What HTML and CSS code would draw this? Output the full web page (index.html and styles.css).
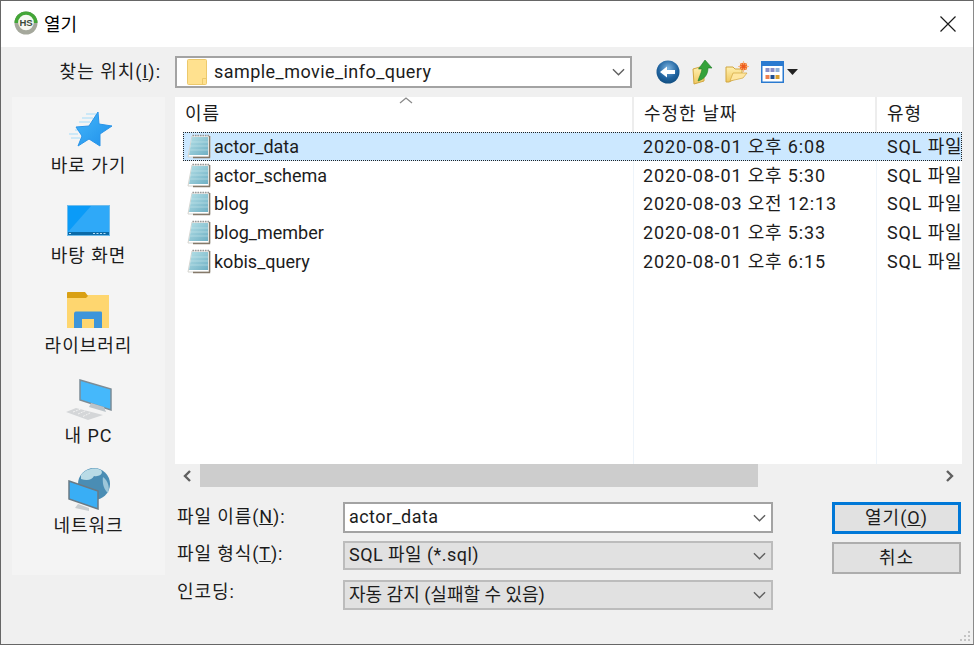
FILE: index.html
```html
<!DOCTYPE html>
<html lang="ko">
<head>
  <meta charset="UTF-8">
  <title>열기</title>
  <link rel="stylesheet" href="styles.css">
</head>
<body>
  <!-- Shared icons -->
  <svg class="icon-defs" width="0" height="0">
    <defs>
      <linearGradient id="page-fill" x1="0" y1="0" x2="1" y2="1">
        <stop offset="0" stop-color="#b4dfe6"/>
        <stop offset="1" stop-color="#6fb0c4"/>
      </linearGradient>
      <linearGradient id="folder-fill" x1="0" y1="0" x2="0" y2="1">
        <stop offset="0" stop-color="#fff0b0"/>
        <stop offset="1" stop-color="#f0c860"/>
      </linearGradient>
      <linearGradient id="star-fill" x1="0" y1="0" x2="1" y2="1">
        <stop offset="0" stop-color="#45b6fa"/>
        <stop offset="1" stop-color="#1f90ea"/>
      </linearGradient>
      <radialGradient id="back-fill" cx="0.5" cy="0.35" r="0.7">
        <stop offset="0" stop-color="#7fb6e2"/>
        <stop offset="0.6" stop-color="#20639f"/>
        <stop offset="1" stop-color="#0f4a7a"/>
      </radialGradient>
      <symbol id="sql-file" viewBox="0 0 24 25">
        <path d="M5 2H23V23H1Z" fill="#fff" stroke="#d4d4cf" stroke-width="1"/>
        <path d="M5 3H21V21H2Z" fill="url(#page-fill)"/>
        <path d="M22.500 2V23.500H6" fill="none" stroke="#85796a" stroke-width="1.400"/>
        <path d="M3.500 8H21M3 12H21M2.500 16H21" stroke="#cfe9ee" stroke-width=".5"/>
        <path d="M5.500 1.500H22" stroke="#999" stroke-width="1.500" stroke-dasharray="1.500 1"/>
      </symbol>
      <symbol id="chevron" viewBox="0 0 14 8">
        <path d="M1 1L7 7L13 1" fill="none" stroke="#606060" stroke-width="1.500"/>
      </symbol>
    </defs>
  </svg>

  <div class="window">
    <div class="titlebar">
      <svg class="app-logo" width="24" height="24" viewBox="0 0 24 24">
        <circle cx="12" cy="12" r="11.500" fill="#a5a89c"/>
        <path d="M.5 12a11.500 11.500 0 0 1 23 0Z" fill="#43a637"/>
        <circle cx="12" cy="11.500" r="7.800" fill="#f6f8f2"/>
        <text x="12" y="15" text-anchor="middle" class="app-logo-text">HS</text>
      </svg>
      <span class="title-text">열기</span>
      <svg class="close-icon" width="16" height="16" viewBox="0 0 16 16">
        <path d="M.5 .5L15.500 15.500M15.500 .5L.5 15.500" stroke="#1a1a1a" stroke-width="1.200"/>
      </svg>
    </div>

    <div class="toolbar">
      <label class="look-label">찾는 위치(<u>I</u>):</label>
      <div class="combo look-combo">
        <svg class="folder-icon" width="20" height="26" viewBox="0 0 20 26">
          <rect x=".5" y=".5" width="19" height="25" rx="1" fill="#ffe18f" stroke="#ecc96c"/>
          <path d="M15.500 25V19.500H19" fill="none" stroke="#ecc96c"/>
        </svg>
        <span class="combo-text">sample_movie_info_query</span>
        <svg class="chevron" width="13" height="8"><use href="#chevron"/></svg>
      </div>
      <div class="nav-icons">
        <svg width="24" height="24" viewBox="0 0 24 24">
          <circle cx="12" cy="12" r="11.500" fill="url(#back-fill)"/>
          <path d="M4 12L11 6.500V10H19V14H11V17.500Z" fill="#fff"/>
        </svg>
        <svg width="22" height="26" viewBox="0 0 22 26">
          <path d="M1 10L8 8L12 10V22L2 25Z" fill="url(#folder-fill)" stroke="#d0a640"/>
          <path d="M6 22C7 18 9 15 10 10H6.500L13 1L20 9H16C16 15 13 20 6 22Z" fill="#35a23a" stroke="#1c7a25" stroke-width=".6"/>
        </svg>
        <svg width="24" height="22" viewBox="0 0 24 22">
          <path d="M1 6H8L10 8H17V14L4 21H1Z" fill="url(#folder-fill)" stroke="#d0a640"/>
          <path d="M5 20L8 12H22L18 17Z" fill="#ffe6a0" stroke="#d0a640" stroke-width=".7"/>
          <circle cx="18.500" cy="5.500" r="3.800" fill="#f0702a"/>
          <path d="M18.500 0V11M13 5.500H24M14.800 1.800L22.200 9.200M22.200 1.800L14.800 9.200" stroke="#f9b070" stroke-width=".8"/>
          <circle cx="18.500" cy="5.500" r="2" fill="#ee5a20"/>
        </svg>
        <div class="view-menu">
          <svg width="23" height="22" viewBox="0 0 23 22">
            <rect x=".75" y=".75" width="21.500" height="20.500" fill="#fff" stroke="#2a7ad0" stroke-width="1.500"/>
            <rect x="1" y="1" width="21" height="4" fill="#2a7ad0"/>
            <g>
              <rect x="4.500" y="7" width="4" height="4" fill="#8a8fc8"/><rect x="9.500" y="7" width="4" height="4" fill="#8a8fc8"/><rect x="14.500" y="7" width="4" height="4" fill="#8fb0d8"/>
              <rect x="4.500" y="14" width="4" height="4" fill="#ee8050"/><rect x="9.500" y="14" width="4" height="4" fill="#1f4f90"/><rect x="14.500" y="14" width="4" height="4" fill="#d8a030"/>
            </g>
          </svg>
          <svg width="11" height="6" viewBox="0 0 11 6"><path d="M0 0H11L5.500 6Z" fill="#222"/></svg>
        </div>
      </div>
    </div>

    <div class="main">
      <!-- Places bar -->
      <nav class="places">
        <div class="place">
          <div class="place-icon">
            <svg width="52" height="40" viewBox="-6 0 52 40">
              <path d="M17 4H27M13 8H24M10 12H21M6 20H11M0 24H9M2 28H11" stroke="#bfe3f8" stroke-width="1.300"/>
              <path d="M29 2L30 14L43 16L31 24L31 36L20 29L9 36L13 26L7 17L20 16Z" fill="url(#star-fill)" stroke="#2a94e8" stroke-linejoin="round"/>
            </svg>
          </div>
          <span>바로 가기</span>
        </div>
        <div class="place">
          <div class="place-icon">
            <svg width="43" height="31" viewBox="0 0 43 31">
              <rect x=".5" y=".5" width="42" height="30" fill="#0a9bf8" stroke="#6fbcec"/>
              <path d="M1 27L24 1H42V27Z" fill="#2fa9f8"/>
              <rect x="1" y="27" width="41" height="3" fill="#0a6aa8"/>
              <path d="M26 28.500H39" stroke="#b8dcf2" stroke-dasharray="2 1.500"/>
              <path d="M2 28.500H4" stroke="#b8dcf2"/>
            </svg>
          </div>
          <span>바탕 화면</span>
        </div>
        <div class="place">
          <div class="place-icon">
            <svg width="43" height="36" viewBox="0 0 43 36">
              <path d="M0 3H42V36H0Z" fill="#fed66f"/>
              <path d="M0 1C0 .5 .5 0 1 0H18L21 4L19 6H0Z" fill="#d9a014"/>
              <path d="M7 36V22C7 20 8 19.500 10 19.500H33C35 19.500 35 20 35 22V36H27V27H15V36Z" fill="#3d95da"/>
            </svg>
          </div>
          <span>라이브러리</span>
        </div>
        <div class="place">
          <div class="place-icon">
            <svg width="46" height="42" viewBox="0 0 46 42">
              <path d="M14 1L45 10V31L14 21Z" fill="#45b8fb" stroke="#7c8c96" stroke-width="1.500"/>
              <path d="M25 24L38 28L40 33L23 28Z" fill="#bcc4ca"/>
              <path d="M0 33L10 29L37 36L22 41Z" fill="#d4d6d8"/>
              <path d="M7 33L15 30M12 35L20 31.500M17 37.500L25 33.500" stroke="#f2f2f2" stroke-dasharray="2 1"/>
            </svg>
          </div>
          <span>내 PC</span>
        </div>
        <div class="place">
          <div class="place-icon">
            <svg width="44" height="44" viewBox="0 0 44 44">
              <circle cx="27" cy="16" r="16" fill="#4a8db4"/>
              <path d="M14 7C19 0 29 -1 34 2C37 6 32 9 27 8C25 12 20 13 14 11Z" fill="#b9dbe6"/>
              <path d="M36 9C41 13 43 19 41 25C37 22 35 15 36 9Z" fill="#9dc7da"/>
              <path d="M2 13L31 23V41L2 31Z" fill="#39aef5" stroke="#6a7a84" stroke-width="1.500"/>
              <path d="M11 36L22 40V43L8 40Z" fill="#c8cdd0"/>
            </svg>
          </div>
          <span>네트워크</span>
        </div>
      </nav>

      <div class="browser">
        <!-- File list -->
        <div class="file-list">
          <div class="list-header">
            <div class="col-head name-head">이름
              <svg class="sort-arrow" width="14" height="7" viewBox="0 0 14 7"><path d="M1 6L7 1L13 6" fill="none" stroke="#8a8a8a" stroke-width="1.300"/></svg>
            </div>
            <div class="col-head">수정한 날짜</div>
            <div class="col-head">유형</div>
          </div>
          <div class="rows">
            <div class="file-row selected">
              <div class="file-name"><svg width="24" height="25"><use href="#sql-file"/></svg><span class="name-text">actor_data</span></div>
              <div class="file-date">2020-08-01 오후 6:08</div>
              <div class="file-type">SQL 파일</div>
            </div>
            <div class="file-row">
              <div class="file-name"><svg width="24" height="25"><use href="#sql-file"/></svg><span class="name-text">actor_schema</span></div>
              <div class="file-date">2020-08-01 오후 5:30</div>
              <div class="file-type">SQL 파일</div>
            </div>
            <div class="file-row">
              <div class="file-name"><svg width="24" height="25"><use href="#sql-file"/></svg><span class="name-text">blog</span></div>
              <div class="file-date">2020-08-03 오전 12:13</div>
              <div class="file-type">SQL 파일</div>
            </div>
            <div class="file-row">
              <div class="file-name"><svg width="24" height="25"><use href="#sql-file"/></svg><span class="name-text">blog_member</span></div>
              <div class="file-date">2020-08-01 오후 5:33</div>
              <div class="file-type">SQL 파일</div>
            </div>
            <div class="file-row">
              <div class="file-name"><svg width="24" height="25"><use href="#sql-file"/></svg><span class="name-text">kobis_query</span></div>
              <div class="file-date">2020-08-01 오후 6:15</div>
              <div class="file-type">SQL 파일</div>
            </div>
          </div>
        </div>

        <div class="hscroll">
          <svg class="scroll-btn" width="10" height="12" viewBox="0 0 10 12"><path d="M8 1L3 6L8 11" fill="none" stroke="#606060" stroke-width="2.400"/></svg>
          <div class="scroll-thumb"></div>
          <svg class="scroll-btn" width="10" height="12" viewBox="0 0 10 12"><path d="M2 1L7 6L2 11" fill="none" stroke="#606060" stroke-width="2.400"/></svg>
        </div>

        <!-- Name, type, encoding and buttons -->
        <div class="open-form">
          <div class="form-rows">
            <div class="form-row row-name">
              <label>파일 이름(<u>N</u>):</label>
              <div class="combo field">
                <span class="combo-text">actor_data</span>
                <svg class="chevron" width="13" height="8"><use href="#chevron"/></svg>
              </div>
            </div>
            <div class="form-row row-type">
              <label>파일 형식(<u>T</u>):</label>
              <div class="combo field disabled">
                <span class="combo-text">SQL 파일 (*.sql)</span>
                <svg class="chevron" width="13" height="8"><use href="#chevron"/></svg>
              </div>
            </div>
            <div class="form-row row-enc">
              <label>인코딩:</label>
              <div class="combo field disabled">
                <span class="combo-text">자동 감지 (실패할 수 있음)</span>
                <svg class="chevron" width="13" height="8"><use href="#chevron"/></svg>
              </div>
            </div>
          </div>
          <div class="form-buttons">
            <button class="btn btn-default">열기(<u>O</u>)</button>
            <button class="btn">취소</button>
          </div>
        </div>
      </div>
    </div>

    <svg class="grip" width="12" height="12" viewBox="0 0 12 12">
      <path d="M9 1h2v2H9zM5 5h2v2H5zM9 5h2v2H9zM1 9h2v2H1zM5 9h2v2H5zM9 9h2v2H9z" fill="#c4c4c4"/>
    </svg>
  </div>
</body>
</html>
```

FILE: styles.css
```css
/* Windows style open file dialog */
* {
  box-sizing: border-box;
}

body {
  margin: 0;
  font-family: Roboto, "Noto Sans CJK KR", sans-serif;
  font-size: 18px;
  line-height: 20px;
  color: #1c1c1c;
  background-color: #f0f0f0;
}

.icon-defs {
  position: absolute;
}

.window {
  position: relative;
  width: 974px;
  height: 645px;
  display: flex;
  flex-direction: column;
  background-color: #f0f0f0;
  border: 1px solid #666;
  border-right-color: #8a8a8a;
  overflow: hidden;
}

/* Title bar */
.titlebar {
  height: 46px;
  flex: none;
  display: flex;
  align-items: center;
  padding: 0 17px 2px 13px;
  background-color: #fff;
}

.app-logo-text {
  font-family: "Liberation Sans", sans-serif;
  font-size: 9.500px;
  font-weight: bold;
  fill: #3a4a3a;
}

.title-text {
  margin-left: 6px;
  margin-top: 3px;
  color: #000;
}

.close-icon {
  margin-left: auto;
  margin-top: 2px;
}

/* Look in row */
.toolbar {
  height: 50px;
  flex: none;
  display: flex;
  align-items: center;
}

.look-label {
  width: 160px;
  text-align: right;
  letter-spacing: 1px;
}

.combo {
  display: flex;
  align-items: center;
  background-color: #fff;
  border: 2px solid #a3a3a3;
  padding: 0 5px 0 4px;
}

.combo .chevron {
  margin-left: auto;
}

.look-combo {
  width: 457px;
  height: 32px;
  margin-left: 14px;
  padding-left: 10px;
}

.folder-icon {
  flex: none;
  margin-right: 7px;
}

.combo-text {
  white-space: nowrap;
  letter-spacing: .45px;
}

.nav-icons {
  display: flex;
  align-items: center;
  gap: 11.500px;
  margin-left: 24px;
}

.view-menu {
  display: flex;
  align-items: center;
  gap: 3px;
}

/* Main area */
.main {
  flex: 1;
  display: flex;
  align-items: flex-start;
  padding-left: 11px;
}

.places {
  width: 153px;
  height: 478px;
  flex: none;
  display: flex;
  flex-direction: column;
  padding-top: 9px;
  background-color: #f4f4f4;
}

.place {
  height: 90px;
  flex: none;
  display: flex;
  flex-direction: column;
  align-items: center;
  letter-spacing: 1px;
}

.place-icon {
  height: 48px;
  margin-bottom: 2px;
  display: flex;
  align-items: center;
  justify-content: center;
}

.browser {
  width: 787px;
  margin-left: 10px;
}

/* File list */
.file-list {
  height: 367px;
  background-color: #fff;
}

.list-header {
  height: 35px;
  display: grid;
  grid-template-columns: 459px 243px 85px;
}

.col-head {
  position: relative;
  padding: 7px 0 0 10px;
  letter-spacing: 1px;
  border-right: 2px solid #ededed;
}

.col-head:last-child {
  border-right: none;
}

.sort-arrow {
  position: absolute;
  top: 0;
  left: 224px;
}

.rows {
  height: 332px;
  /* column lines run down the empty part of the list */
  background-image: linear-gradient(#eef4fa, #eef4fa), linear-gradient(#eef4fa, #eef4fa);
  background-size: 1px 100%;
  background-position: 458px 0, 701px 0;
  background-repeat: no-repeat;
}

.file-row {
  height: 28.750px;
  display: grid;
  grid-template-columns: 450px 243px 86px;
  align-items: center;
  margin-left: 8px;
  white-space: nowrap;
  overflow: hidden;
}

.file-row.selected {
  background-color: #cce8ff;
  outline: 1px dotted #222;
  outline-offset: -1px;
}

.file-name {
  display: flex;
  align-items: center;
  gap: 3px;
  padding-left: 4px;
}

.name-text {
  padding-top: 1px;
}

.file-date,
.file-type {
  padding: 1px 0 0 10px;
  letter-spacing: .85px;
}

.file-type {
  padding-left: 11px;
}

/* Horizontal scrollbar */
.hscroll {
  height: 23px;
  display: flex;
  align-items: center;
}

.scroll-btn {
  flex: none;
  margin: 0 7px;
}

.scroll-thumb {
  height: 23px;
  width: 558px;
  margin-left: 1px;
  margin-right: auto;
  background-color: #cdcdcd;
}

/* Bottom form */
.open-form {
  display: flex;
  padding-top: 15px;
}

.form-rows {
  width: 598px;
  display: flex;
  flex-direction: column;
}

.form-row {
  display: flex;
  align-items: center;
}

.form-row label {
  width: 168px;
  padding-left: 2px;
  padding-bottom: 3px;
  letter-spacing: .9px;
}

.row-name label {
  padding-bottom: 1px;
}

.field {
  width: 430px;
  height: 100%;
}

.row-name {
  height: 31px;
}

.row-name .combo-text {
  padding-bottom: 2px;
}

.row-type {
  height: 29px;
  margin-top: 8px;
}

.row-type .combo-text {
  padding-bottom: 2px;
}

.row-enc {
  height: 30px;
  margin-top: 10px;
}

.row-enc label {
  padding-bottom: 7px;
}

.row-enc .combo-text {
  letter-spacing: 0;
}

.combo.disabled {
  background-color: #e1e1e1;
  border-color: #bcbcbc;
}

.form-buttons {
  display: flex;
  flex-direction: column;
  gap: 8px;
  margin-left: 59px;
}

.btn {
  width: 129px;
  height: 32px;
  padding: 0;
  font: inherit;
  letter-spacing: 1px;
  color: #1c1c1c;
  background-color: #e1e1e1;
  border: 2px solid #adadad;
}

.btn-default {
  border: 3px solid #0078d7;
}

.grip {
  position: absolute;
  right: 2px;
  bottom: 2px;
}
```
